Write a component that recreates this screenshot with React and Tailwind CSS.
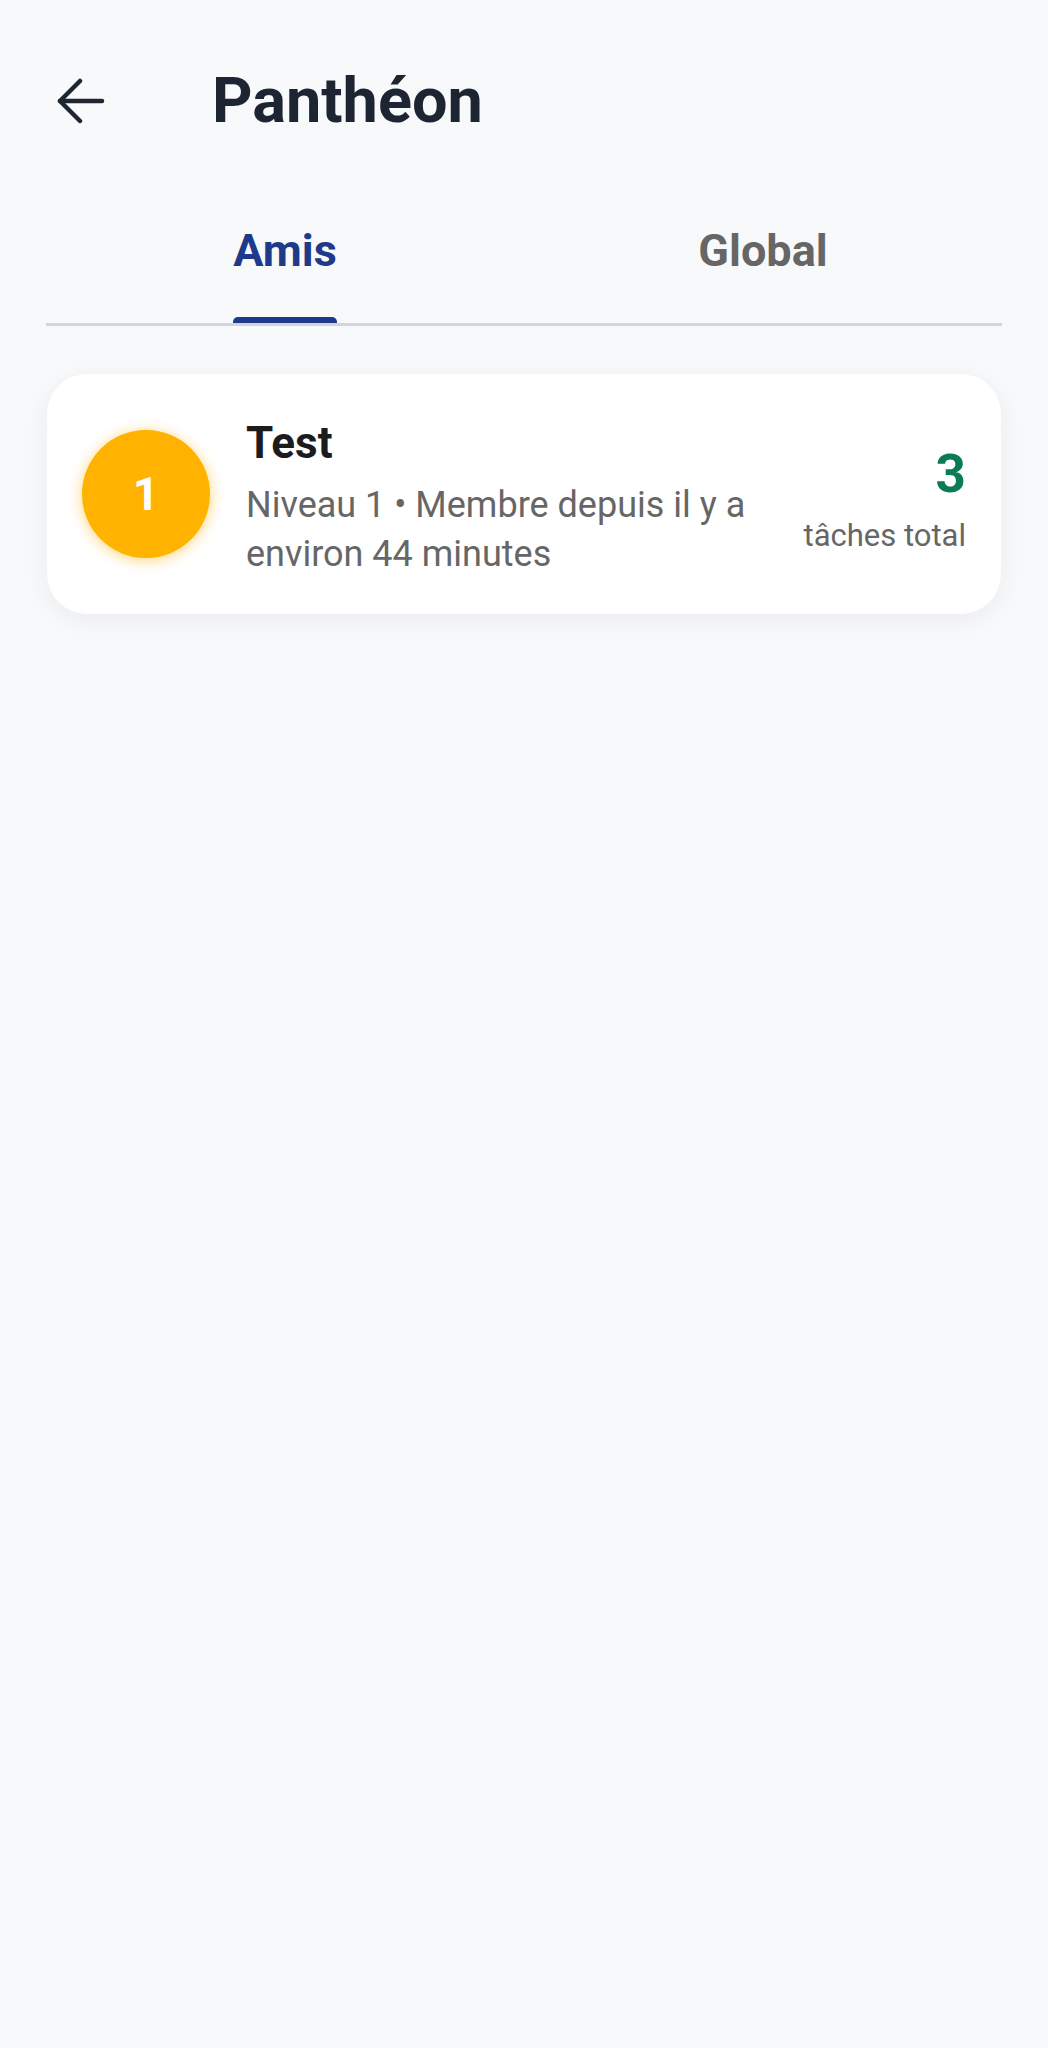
export default function App() {
  return (
    <div className="min-h-screen bg-[#f8f9fb] font-['Roboto',sans-serif]">
      <header className="flex items-center pt-[66px] pl-[57px] h-[136px]">
        <button className="flex items-center justify-center w-[48px] h-[48px]">
          <svg width="48" height="46" viewBox="0 0 48 46" fill="none" stroke="#1f2633" strokeWidth="4.5" strokeLinecap="round" strokeLinejoin="round">
            <path d="M3 23H45" />
            <path d="M23 3L3 23L23 43" />
          </svg>
        </button>
        <h1 className="ml-[107px] text-[63px] leading-[70px] font-bold text-[#1e2532]">Panthéon</h1>
      </header>

      <nav className="mx-[46px] mt-[88px] flex border-b-[3px] border-[#d3d5da]">
        <Tab label="Amis" active />
        <Tab label="Global" />
      </nav>

      <div className="mx-[47px] mt-[48px] h-[240px] rounded-[40px] bg-white shadow-[0_6px_28px_rgba(17,24,39,0.06)] flex items-center pl-[35px] pr-[35px]">
        <div className="w-[128px] h-[128px] shrink-0 rounded-full bg-[#ffb300] shadow-[0_2px_14px_rgba(255,179,0,0.55)] flex items-center justify-center text-white text-[46px] font-bold">
          1
        </div>
        <div className="ml-[36px] flex-1 mt-[8px]">
          <p className="text-[44px] leading-[50px] font-bold text-[#1c1c1e]">Test</p>
          <p className="mt-[13px] text-[36px] leading-[49px] text-[#666666] max-w-[520px]">
            Niveau 1 • Membre depuis il y a environ 44 minutes
          </p>
        </div>
        <div className="flex flex-col items-end mt-[12px]">
          <p className="text-[53px] leading-[60px] font-bold text-[#0a7a57]">3</p>
          <p className="mt-[12px] text-[31px] leading-[40px] text-[#666666]">tâches total</p>
        </div>
      </div>
    </div>
  )
}

function Tab({ label, active = false }) {
  return (
    <div className="flex-1 flex flex-col items-center">
      <span className={`text-[45px] leading-[54px] font-bold ${active ? 'text-[#1e3a8a]' : 'text-[#666666]'}`}>
        {label}
      </span>
      <div className={`mt-[39px] h-[6px] rounded-t-[5px] ${active ? 'bg-[#1e3a8a]' : 'bg-transparent'}`}>
        <span className="invisible text-[45px] leading-[0px] font-bold">{label}</span>
      </div>
    </div>
  )
}
